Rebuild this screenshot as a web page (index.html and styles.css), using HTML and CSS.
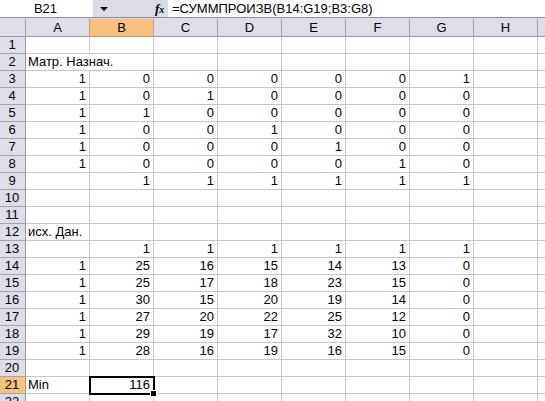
FILE: index.html
```html
<!DOCTYPE html>
<html>
<head>
<meta charset="utf-8">
<link rel="stylesheet" href="styles.css">
</head>
<body>
<div class="app">
  <div class="fbar">
    <div class="namebox">B21</div>
    <div class="namedrop"><span class="arrow"></span></div>
    <div class="fxarea"><span class="fx">f<span class="fxx">x</span></span></div>
    <div class="formula">=СУММПРОИЗВ(B14:G19;B3:G8)</div>
  </div>
  <div class="gap"></div>
  <div class="sheet">
    <div class="row hdr"><div class="corner"></div><div class="ch">A</div><div class="ch sel">B</div><div class="ch">C</div><div class="ch">D</div><div class="ch">E</div><div class="ch">F</div><div class="ch">G</div><div class="ch">H</div><div class="ch"></div></div>
    <div class="row"><div class="rh">1</div><div class="c"></div><div class="c"></div><div class="c"></div><div class="c"></div><div class="c"></div><div class="c"></div><div class="c"></div><div class="c"></div><div class="c"></div></div>
    <div class="row"><div class="rh">2</div><div class="c t span">Матр. Назнач.</div><div class="c"></div><div class="c"></div><div class="c"></div><div class="c"></div><div class="c"></div><div class="c"></div><div class="c"></div></div>
    <div class="row"><div class="rh">3</div><div class="c">1</div><div class="c">0</div><div class="c">0</div><div class="c">0</div><div class="c">0</div><div class="c">0</div><div class="c">1</div><div class="c"></div><div class="c"></div></div>
    <div class="row"><div class="rh">4</div><div class="c">1</div><div class="c">0</div><div class="c">1</div><div class="c">0</div><div class="c">0</div><div class="c">0</div><div class="c">0</div><div class="c"></div><div class="c"></div></div>
    <div class="row"><div class="rh">5</div><div class="c">1</div><div class="c">1</div><div class="c">0</div><div class="c">0</div><div class="c">0</div><div class="c">0</div><div class="c">0</div><div class="c"></div><div class="c"></div></div>
    <div class="row"><div class="rh">6</div><div class="c">1</div><div class="c">0</div><div class="c">0</div><div class="c">1</div><div class="c">0</div><div class="c">0</div><div class="c">0</div><div class="c"></div><div class="c"></div></div>
    <div class="row"><div class="rh">7</div><div class="c">1</div><div class="c">0</div><div class="c">0</div><div class="c">0</div><div class="c">1</div><div class="c">0</div><div class="c">0</div><div class="c"></div><div class="c"></div></div>
    <div class="row"><div class="rh">8</div><div class="c">1</div><div class="c">0</div><div class="c">0</div><div class="c">0</div><div class="c">0</div><div class="c">1</div><div class="c">0</div><div class="c"></div><div class="c"></div></div>
    <div class="row"><div class="rh">9</div><div class="c"></div><div class="c">1</div><div class="c">1</div><div class="c">1</div><div class="c">1</div><div class="c">1</div><div class="c">1</div><div class="c"></div><div class="c"></div></div>
    <div class="row"><div class="rh">10</div><div class="c"></div><div class="c"></div><div class="c"></div><div class="c"></div><div class="c"></div><div class="c"></div><div class="c"></div><div class="c"></div><div class="c"></div></div>
    <div class="row"><div class="rh">11</div><div class="c"></div><div class="c"></div><div class="c"></div><div class="c"></div><div class="c"></div><div class="c"></div><div class="c"></div><div class="c"></div><div class="c"></div></div>
    <div class="row"><div class="rh">12</div><div class="c t">исх. Дан.</div><div class="c"></div><div class="c"></div><div class="c"></div><div class="c"></div><div class="c"></div><div class="c"></div><div class="c"></div><div class="c"></div></div>
    <div class="row"><div class="rh">13</div><div class="c"></div><div class="c">1</div><div class="c">1</div><div class="c">1</div><div class="c">1</div><div class="c">1</div><div class="c">1</div><div class="c"></div><div class="c"></div></div>
    <div class="row"><div class="rh">14</div><div class="c">1</div><div class="c">25</div><div class="c">16</div><div class="c">15</div><div class="c">14</div><div class="c">13</div><div class="c">0</div><div class="c"></div><div class="c"></div></div>
    <div class="row"><div class="rh">15</div><div class="c">1</div><div class="c">25</div><div class="c">17</div><div class="c">18</div><div class="c">23</div><div class="c">15</div><div class="c">0</div><div class="c"></div><div class="c"></div></div>
    <div class="row"><div class="rh">16</div><div class="c">1</div><div class="c">30</div><div class="c">15</div><div class="c">20</div><div class="c">19</div><div class="c">14</div><div class="c">0</div><div class="c"></div><div class="c"></div></div>
    <div class="row"><div class="rh">17</div><div class="c">1</div><div class="c">27</div><div class="c">20</div><div class="c">22</div><div class="c">25</div><div class="c">12</div><div class="c">0</div><div class="c"></div><div class="c"></div></div>
    <div class="row"><div class="rh">18</div><div class="c">1</div><div class="c">29</div><div class="c">19</div><div class="c">17</div><div class="c">32</div><div class="c">10</div><div class="c">0</div><div class="c"></div><div class="c"></div></div>
    <div class="row"><div class="rh">19</div><div class="c">1</div><div class="c">28</div><div class="c">16</div><div class="c">19</div><div class="c">16</div><div class="c">15</div><div class="c">0</div><div class="c"></div><div class="c"></div></div>
    <div class="row"><div class="rh">20</div><div class="c"></div><div class="c"></div><div class="c"></div><div class="c"></div><div class="c"></div><div class="c"></div><div class="c"></div><div class="c"></div><div class="c"></div></div>
    <div class="row"><div class="rh sel">21</div><div class="c t">Min</div><div class="c active">116<span class="handle"></span></div><div class="c"></div><div class="c"></div><div class="c"></div><div class="c"></div><div class="c"></div><div class="c"></div><div class="c"></div></div>
    <div class="row"><div class="rh">22</div><div class="c"></div><div class="c"></div><div class="c"></div><div class="c"></div><div class="c"></div><div class="c"></div><div class="c"></div><div class="c"></div><div class="c"></div></div>
  </div>
</div>
</body>
</html>
```
FILE: styles.css
```css
html, body {
  margin: 0;
  padding: 0;
  background: #fff;
}
.app {
  width: 545px;
  height: 401px;
  overflow: hidden;
  font-family: "Liberation Sans", Arial, sans-serif;
  font-size: 13px;
  color: #000;
}
.fbar {
  display: flex;
  height: 17px;
  border-bottom: 1px solid #8e8e96;
  background: #fff;
}
.namebox {
  width: 93px;
  text-align: center;
  line-height: 17px;
  padding-right: 2px;
  box-sizing: border-box;
}
.namedrop {
  width: 50px;
  background: #dcdce6;
  display: flex;
  align-items: center;
  padding-left: 7px;
  box-sizing: border-box;
}
.arrow {
  width: 0;
  height: 0;
  border-left: 4px solid transparent;
  border-right: 4px solid transparent;
  border-top: 4px solid #000;
}
.fxarea {
  width: 25px;
  background: #dcdce6;
  display: flex;
  align-items: center;
  padding-left: 12px;
  box-sizing: border-box;
}
.fx {
  font-family: "Liberation Serif", "Times New Roman", serif;
  font-style: italic;
  font-weight: bold;
  font-size: 13px;
  line-height: 17px;
  color: #000;
}
.fxx {
  font-size: 10px;
}
.formula {
  flex: 1;
  line-height: 17px;
  padding-left: 4px;
  white-space: nowrap;
}
.gap {
  height: 1px;
  background: #dcdce6;
}
.row {
  display: grid;
  grid-template-columns: 26px repeat(9, 64px);
  height: 17px;
}
.row.hdr {
  height: 18px;
}
.row > div {
  box-sizing: border-box;
  border-right: 1px solid #c6c6c6;
  border-bottom: 1px solid #c6c6c6;
  line-height: 16px;
  white-space: nowrap;
}
.hdr > div {
  background: #dedee8;
  border-right: 1px solid #a4a4ae;
  border-bottom: 1px solid #9a9aa6;
  text-align: center;
  line-height: 17px;
}
.hdr > .sel {
  background: #f8c27c;
  border-bottom-color: #c8944e;
}
.rh {
  background: #dedee8;
  text-align: center;
  border-right-color: #9a9aa6 !important;
  border-bottom-color: #a4a4ae !important;
  padding-right: 1px;
}
.rh.sel {
  background: #f8c27c;
  border-right-color: #c8944e !important;
}
.c {
  text-align: right;
  padding-right: 3px;
}
.c.t {
  text-align: left;
  padding-left: 2px;
  padding-right: 0;
  overflow: visible;
}
.c.span {
  grid-column: span 2;
}
.c.active {
  position: relative;
  outline: 2px solid #000;
  outline-offset: -1px;
  border-color: transparent;
}
.handle {
  position: absolute;
  right: -4px;
  bottom: -4px;
  width: 5px;
  height: 5px;
  background: #000;
  border: 1px solid #fff;
}
```
